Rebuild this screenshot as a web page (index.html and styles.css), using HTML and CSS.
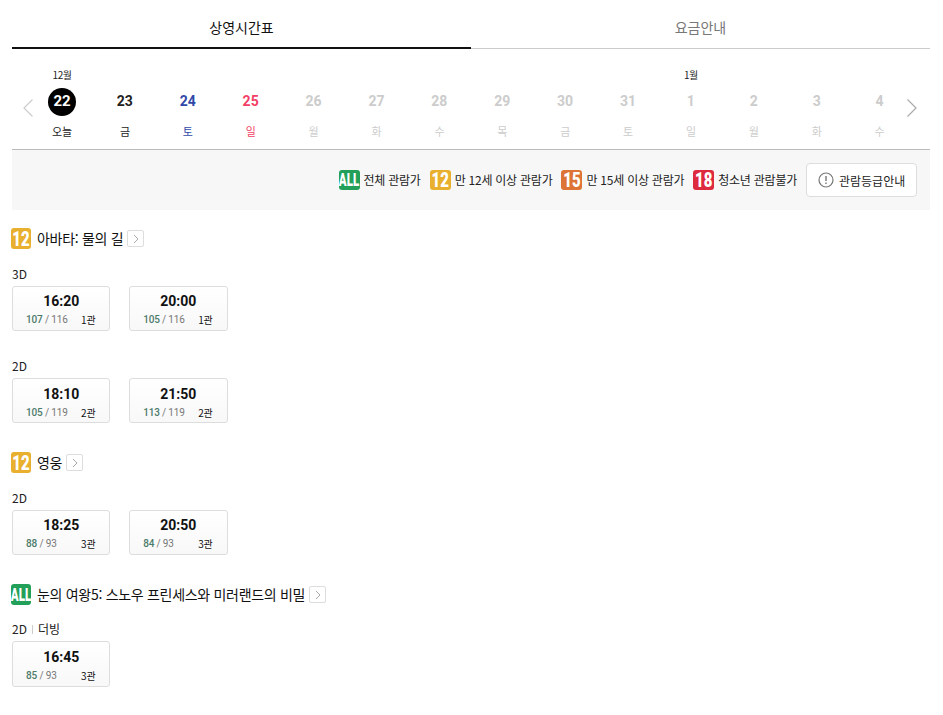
FILE: index.html
```html
<!DOCTYPE html>
<html lang="ko">
<head>
<meta charset="utf-8">
<title>상영시간표</title>
<link rel="stylesheet" href="styles.css">
</head>
<body>
<main class="page">
  <nav class="tabs">
    <div class="tab tab-on">상영시간표</div>
    <div class="tab">요금안내</div>
  </nav>
  <section class="dates">
    <div class="arrow arrow-prev"><svg width="10" height="18" viewBox="0 0 10 18"><path d="M9.5 .5 1 9l8.5 8.5" fill="none" stroke="#ccc" stroke-width="1.2"/></svg></div>
    <div class="date"><span class="month">12월</span><span class="num today">22</span><span class="day">오늘</span></div>
    <div class="date"><span class="month"></span><span class="num">23</span><span class="day">금</span></div>
    <div class="date sat"><span class="month"></span><span class="num">24</span><span class="day">토</span></div>
    <div class="date sun"><span class="month"></span><span class="num">25</span><span class="day">일</span></div>
    <div class="date off"><span class="month"></span><span class="num">26</span><span class="day">월</span></div>
    <div class="date off"><span class="month"></span><span class="num">27</span><span class="day">화</span></div>
    <div class="date off"><span class="month"></span><span class="num">28</span><span class="day">수</span></div>
    <div class="date off"><span class="month"></span><span class="num">29</span><span class="day">목</span></div>
    <div class="date off"><span class="month"></span><span class="num">30</span><span class="day">금</span></div>
    <div class="date off"><span class="month"></span><span class="num">31</span><span class="day">토</span></div>
    <div class="date off"><span class="month">1월</span><span class="num">1</span><span class="day">일</span></div>
    <div class="date off"><span class="month"></span><span class="num">2</span><span class="day">월</span></div>
    <div class="date off"><span class="month"></span><span class="num">3</span><span class="day">화</span></div>
    <div class="date off"><span class="month"></span><span class="num">4</span><span class="day">수</span></div>
    <div class="arrow arrow-next"><svg width="10" height="18" viewBox="0 0 10 18"><path d="M.5 .5 9 9 .5 17.500" fill="none" stroke="#aaa" stroke-width="1.2"/></svg></div>
  </section>
  <section class="legend">
    <span class="legend-item"><span class="badge all"><b>ALL</b></span>전체 관람가</span>
    <span class="legend-item"><span class="badge r12"><b>12</b></span>만 12세 이상 관람가</span>
    <span class="legend-item"><span class="badge r15"><b>15</b></span>만 15세 이상 관람가</span>
    <span class="legend-item"><span class="badge r18"><b>18</b></span>청소년 관람불가</span>
    <span class="guide"><svg width="16" height="16" viewBox="0 0 16 16"><circle cx="8" cy="8" r="7" fill="none" stroke="#777" stroke-width="1.2"/><path d="M8 4v5" stroke="#777" stroke-width="1.4"/><path d="M8 10.4v1.6" stroke="#777" stroke-width="1.4"/></svg>관람등급안내</span>
  </section>

  <article class="movie">
    <h2 class="title"><span class="badge r12"><b>12</b></span>아바타: 물의 길<span class="more"><svg width="6" height="10" viewBox="0 0 6 10"><path d="M1 1l4 4-4 4" fill="none" stroke="#aaa"/></svg></span></h2>
    <div class="group">
      <h3 class="format">3D</h3>
      <div class="cards">
        <div class="card"><strong>16:20</strong><div class="info"><span class="seats"><em>107</em> / 116</span><span class="hall">1관</span></div></div>
        <div class="card"><strong>20:00</strong><div class="info"><span class="seats"><em>105</em> / 116</span><span class="hall">1관</span></div></div>
      </div>
    </div>
    <div class="group">
      <h3 class="format">2D</h3>
      <div class="cards">
        <div class="card"><strong>18:10</strong><div class="info"><span class="seats"><em>105</em> / 119</span><span class="hall">2관</span></div></div>
        <div class="card"><strong>21:50</strong><div class="info"><span class="seats"><em>113</em> / 119</span><span class="hall">2관</span></div></div>
      </div>
    </div>
  </article>

  <article class="movie">
    <h2 class="title"><span class="badge r12"><b>12</b></span>영웅<span class="more"><svg width="6" height="10" viewBox="0 0 6 10"><path d="M1 1l4 4-4 4" fill="none" stroke="#aaa"/></svg></span></h2>
    <div class="group">
      <h3 class="format">2D</h3>
      <div class="cards">
        <div class="card"><strong>18:25</strong><div class="info"><span class="seats"><em>88</em> / 93</span><span class="hall">3관</span></div></div>
        <div class="card"><strong>20:50</strong><div class="info"><span class="seats"><em>84</em> / 93</span><span class="hall">3관</span></div></div>
      </div>
    </div>
  </article>

  <article class="movie">
    <h2 class="title"><span class="badge all"><b>ALL</b></span>눈의 여왕5: 스노우 프린세스와 미러랜드의 비밀<span class="more"><svg width="6" height="10" viewBox="0 0 6 10"><path d="M1 1l4 4-4 4" fill="none" stroke="#aaa"/></svg></span></h2>
    <div class="group group-dub">
      <h3 class="format">2D<i class="sep"></i>더빙</h3>
      <div class="cards">
        <div class="card card-tall"><strong>16:45</strong><div class="info"><span class="seats"><em>85</em> / 93</span><span class="hall">3관</span></div></div>
      </div>
    </div>
  </article>
</main>
</body>
</html>
```
FILE: styles.css
```css
* { box-sizing: border-box; }
html, body { margin: 0; padding: 0; background: #fff; }
body {
  font-family: "Noto Sans CJK KR", Roboto, sans-serif;
  color: #111;
  font-size: 12px;
}
.page { width: 918px; margin-left: 12px; }

.tabs { display: flex; height: 49px; }
.tab {
  flex: 1;
  text-align: center;
  font-size: 14px;
  line-height: 20px;
  padding-top: 17px;
  color: #777;
  border-bottom: 1px solid #ccc;
}
.tab-on { color: #111; border-bottom: 2px solid #111; }

.dates {
  position: relative;
  display: flex;
  height: 101px;
  padding: 19px 0 0 18.55px;
  border-bottom: 1px solid #bbb;
}
.arrow { position: absolute; top: 50px; height: 18px; }
.arrow-prev { left: 11px; }
.arrow-next { right: 13px; }
.date { width: 62.9px; flex: none; display: flex; flex-direction: column; align-items: center; }
.month { height: 14px; line-height: 14px; font-size: 10px; letter-spacing: -.5px; color: #222; margin-bottom: 6px; }
.num {
  width: 28px; height: 28px; line-height: 27px; text-align: center;
  font-family: Roboto, sans-serif; font-weight: 700; font-size: 14px; color: #222;
}
.day { margin-top: 7px; line-height: 16px; font-size: 11px; letter-spacing: -.2px; color: #222; }
.today { background: #000; color: #fff; border-radius: 50%; font-size: 15px; }
.sat .num, .sat .day { color: #2f48a8; }
.sun .num, .sun .day { color: #f23f66; }
.off .num, .off .day { color: #ccc; }

.legend {
  display: flex;
  justify-content: flex-end;
  align-items: center;
  gap: 9px;
  height: 60px;
  padding-right: 13px;
  background: #f7f7f7;
}
.legend-item { display: flex; align-items: center; gap: 4px; font-size: 12px; letter-spacing: -.24px; line-height: 20px; color: #222; }
.badge {
  display: flex; align-items: center; justify-content: center;
  width: 21px; height: 20px; flex: none;
  border-radius: 3px; color: #fff; letter-spacing: 0;
}
.badge b {
  font-family: Roboto, sans-serif; font-weight: 900; font-size: 15px; line-height: 20px;
  transform: scaleY(1.4); white-space: nowrap;
}
.badge.all b { font-size: 11.5px; transform: scaleY(1.6); }
.all { background: #22a05a; }
.r12 { background: #e9b02f; }
.r15 { background: #dd7334; }
.r18 { background: #dd2a3e; }
.guide {
  display: flex; align-items: center; gap: 5px;
  width: 111px; height: 34px; padding-left: 11px;
  background: #fff; border: 1px solid #ddd; border-radius: 4px;
  font-size: 12px; color: #222;
}

.movie { margin-top: 29px; }
.legend + .movie { margin-top: 18px; }
.title {
  display: flex; align-items: center; margin: 0; height: 21px;
  font-size: 14px; font-weight: 400; letter-spacing: -.3px; color: #111; line-height: 21px;
}
.title .badge { height: 21px; width: 20px; margin-right: 6px; margin-left: -1px; }
.more {
  display: flex; align-items: center; justify-content: center;
  width: 17px; height: 17px; margin-left: 4px;
  border: 1px solid #ddd; border-radius: 2px; background: #fff;
}
.group { margin-top: 16px; }
.group + .group { margin-top: 26px; }
.group-dub { margin-top: 15px; }
.format {
  display: flex; align-items: center;
  margin: 0 0 3px; font-size: 12px; font-weight: 400; line-height: 18px; color: #222; height: 18px;
}
.sep { width: 1px; height: 9px; background: #ccc; margin: 0 5px; }
.cards { display: flex; gap: 18.7px; }
.card {
  width: 98.45px; height: 45px;
  border: 1px solid #ddd; border-radius: 3px;
  background: linear-gradient(#fff, #f8f8f8);
  display: flex; flex-direction: column; align-items: center;
}
.card-tall { height: 46px; }
.card strong {
  font-family: Roboto, sans-serif; font-weight: 700; font-size: 14px; line-height: 18px;
  margin-top: 5px; color: #111;
}
.card-tall strong, .group + .group strong { margin-top: 6px; }
.info {
  width: 100%; display: flex; justify-content: space-between; align-items: center;
  padding: 0 14px 0 13px; height: 14px; margin-top: 2px;
}
.seats { font-family: Roboto, sans-serif; font-size: 10px; letter-spacing: -.15px; color: #777; }
.seats em { font-style: normal; font-weight: 500; color: #4c7a6a; }
.hall { font-size: 10px; letter-spacing: -.2px; color: #111; }
```
